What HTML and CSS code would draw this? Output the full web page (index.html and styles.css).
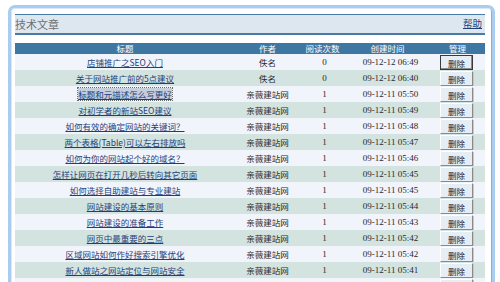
FILE: index.html
```html
<!DOCTYPE html>
<html>
<head>
<meta charset="utf-8">
<link rel="stylesheet" href="styles.css">
</head>
<body>
<div class="frame">
  <div class="bar">
    <span class="bar-title">技术文章</span>
    <a class="help" href="#">帮助</a>
  </div>
  <table class="list">
    <colgroup>
      <col class="c1"><col class="c2"><col class="c3"><col class="c4"><col class="c5">
    </colgroup>
    <thead>
      <tr><th>标题</th><th>作者</th><th>阅读次数</th><th>创建时间</th><th>管理</th></tr>
    </thead>
    <tbody>
      <tr><td><a href="#">店铺推广之SEO入门</a></td><td>佚名</td><td class="num">0</td><td class="date">09-12-12 06:49</td><td><button class="del first">删除</button></td></tr>
      <tr><td><a href="#">关于网站推广前的5点建议</a></td><td>佚名</td><td class="num">0</td><td class="date">09-12-12 06:40</td><td><button class="del">删除</button></td></tr>
      <tr><td><a class="sel" href="#">标题和元描述怎么写更好</a></td><td>亲薇建站网</td><td class="num">1</td><td class="date">09-12-11 05:50</td><td><button class="del">删除</button></td></tr>
      <tr><td><a href="#">对初学者的新站SEO建议</a></td><td>亲薇建站网</td><td class="num">1</td><td class="date">09-12-11 05:49</td><td><button class="del">删除</button></td></tr>
      <tr><td><a href="#">如何有效的确定网站的关键词？</a></td><td>亲薇建站网</td><td class="num">1</td><td class="date">09-12-11 05:48</td><td><button class="del">删除</button></td></tr>
      <tr><td><a href="#">两个表格(Table)可以左右排放吗</a></td><td>亲薇建站网</td><td class="num">1</td><td class="date">09-12-11 05:47</td><td><button class="del">删除</button></td></tr>
      <tr><td><a href="#">如何为你的网站起个好的域名？</a></td><td>亲薇建站网</td><td class="num">1</td><td class="date">09-12-11 05:46</td><td><button class="del">删除</button></td></tr>
      <tr><td><a href="#">怎样让网页在打开几秒后转向其它页面</a></td><td>亲薇建站网</td><td class="num">1</td><td class="date">09-12-11 05:45</td><td><button class="del">删除</button></td></tr>
      <tr><td><a href="#">如何选择自助建站与专业建站</a></td><td>亲薇建站网</td><td class="num">1</td><td class="date">09-12-11 05:45</td><td><button class="del">删除</button></td></tr>
      <tr><td><a href="#">网站建设的基本原则</a></td><td>亲薇建站网</td><td class="num">1</td><td class="date">09-12-11 05:44</td><td><button class="del">删除</button></td></tr>
      <tr><td><a href="#">网站建设的准备工作</a></td><td>亲薇建站网</td><td class="num">1</td><td class="date">09-12-11 05:43</td><td><button class="del">删除</button></td></tr>
      <tr><td><a href="#">网页中最重要的三点</a></td><td>亲薇建站网</td><td class="num">1</td><td class="date">09-12-11 05:42</td><td><button class="del">删除</button></td></tr>
      <tr><td><a href="#">区域网站如何作好搜索引擎优化</a></td><td>亲薇建站网</td><td class="num">1</td><td class="date">09-12-11 05:42</td><td><button class="del">删除</button></td></tr>
      <tr><td><a href="#">新人做站之网站定位与网站安全</a></td><td>亲薇建站网</td><td class="num">1</td><td class="date">09-12-11 05:41</td><td><button class="del">删除</button></td></tr>
      <tr><td></td><td></td><td></td><td></td><td><button class="del" aria-label="删除"></button></td></tr>
    </tbody>
  </table>
</div>
</body>
</html>
```
FILE: styles.css
```css
html, body {
  margin: 0;
  padding: 0;
  background: #ffffff;
  overflow: hidden;
}
body {
  width: 500px;
  height: 282px;
  font-family: "Noto Sans CJK SC", "Liberation Sans", sans-serif;
}
.frame {
  margin: 5px 0 0 8px;
  width: 487px;
  height: 277px;
  overflow: hidden;
  border: 3px solid #a9cdf0;
  border-bottom: none;
  border-radius: 7px 7px 0 0;
  box-shadow: inset 1px 1px 0 #d8e8f8, inset -1px 0 0 #7fb2e4;
  padding: 6px 7px 0 4px;
  box-sizing: border-box;
  background: #fff;
}
.bar {
  display: flex;
  justify-content: space-between;
  align-items: center;
  height: 21px;
  box-sizing: border-box;
  background: #dde7f0;
  border-top: 1px solid #4a7ba6;
  border-bottom: 2px solid #4a7ba6;
  padding: 0 3px 0 0;
}
.bar-title {
  font-size: 11px;
  color: #6f6f6f;
  line-height: 1;
}
.help {
  font-size: 9.5px;
  color: #1d3f7c;
  text-decoration: underline;
  line-height: 1;
}
.list {
  margin-top: 8px;
  width: 470px;
  border-collapse: collapse;
  table-layout: fixed;
}
.c1 { width: 220px; }
.c2 { width: 65px; }
.c3 { width: 45px; }
.c4 { width: 85px; }
.c5 { width: 55px; }
.list th {
  background: #3f77a3;
  color: #ffffff;
  font-weight: normal;
  font-size: 8.5px;
  height: 11px;
  padding: 0;
  line-height: 11px;
  text-align: center;
}
.list td {
  height: 16px;
  padding: 0;
  font-size: 8.5px;
  line-height: 16px;
  text-align: center;
  color: #2a2a2a;
  white-space: nowrap;
  overflow: hidden;
}
.list tbody tr:nth-child(odd) td { background: #f1f4fb; }
.list tbody tr:nth-child(even) td { background: #d3e3df; }
.list td a {
  color: #1d3f7c;
  text-decoration: underline;
}
.list td a.sel {
  background: #c5cedc;
  outline: 1px dotted #6a6a6a;
}
.list td.num,
.list td.date {
  font-family: "Liberation Serif", serif;
  font-size: 9px;
}
.list td.num { padding-left: 4px; }
.list td.date { padding-left: 6px; }
.del {
  display: block;
  margin: 1px 0 0 10px;
  width: 33px;
  height: 15px;
  padding: 0;
  font-family: "Noto Sans CJK SC", sans-serif;
  font-size: 8.5px;
  line-height: 12px;
  color: #222;
  background: #e6edf4;
  border: 1px solid;
  border-color: #ffffff #8a8a8a #8a8a8a #ffffff;
  box-shadow: 1px 1px 0 #c8c8c8;
}
.del.first {
  border: 1px solid #3a3a3a;
  box-shadow: inset -1px -1px 0 #8a8a8a;
}
```
